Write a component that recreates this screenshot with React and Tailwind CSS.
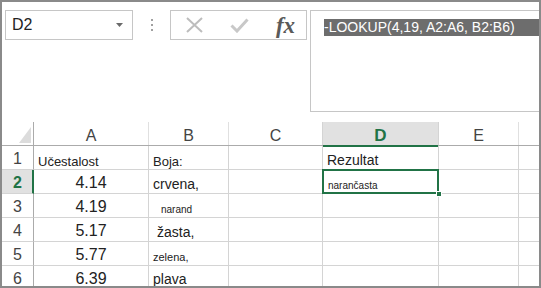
import React from "react";

function Row({ num, active, children }) {
  return (
    <div className="flex h-[24px] shrink-0">
      {active ? (
        <div className="w-[32px] shrink-0 h-full bg-[#e1e1e1] border-r-2 border-r-[#217346] border-b border-b-[#d4d4d4] flex items-center justify-center text-[16px] leading-none font-bold text-[#217346] pl-[1px] pt-[3px]">
          {num}
        </div>
      ) : (
        <div className="w-[32px] shrink-0 h-full border-r border-r-[#ababab] border-b border-b-[#d4d4d4] flex items-center justify-center text-[16px] leading-none text-[#444] pt-[3px]">
          {num}
        </div>
      )}
      {children}
    </div>
  );
}

export default function App() {
  const rows = [
    { n: "1", a: "Učestalost", b: "Boja:", d: "Rezultat" },
    { n: "2", a: "4.14", b: "crvena,", d: "narančasta" },
    { n: "3", a: "4.19", b: "narand" },
    { n: "4", a: "5.17", b: "žasta," },
    { n: "5", a: "5.77", b: "zelena," },
    { n: "6", a: "6.39", b: "plava" },
  ];
  return (
    <div className="w-[541px] h-[288px] bg-white border-2 border-[#8a8a8a] overflow-hidden flex flex-col font-['Liberation_Sans',Arial,sans-serif] text-[#222]">
      {/* top formula area */}
      <div className="h-[120px] shrink-0 flex items-start pt-[8px] pl-[3px]">
        <div className="w-[128px] h-[30px] border border-[#c6c6c6] flex items-center justify-between pl-[6px] pr-[9px]">
          <span className="text-[16px] text-[#222]">D2</span>
          <svg width="7" height="4" viewBox="0 0 7 4">
            <polygon points="0,0 7,0 3.5,4" fill="#6a6a6a" />
          </svg>
        </div>
        <div className="w-[37px] h-[30px] flex flex-col items-center justify-center gap-[3px]">
          <div className="w-[2px] h-[2px] bg-[#a0a0a0]" />
          <div className="w-[2px] h-[2px] bg-[#a0a0a0]" />
          <div className="w-[2px] h-[2px] bg-[#a0a0a0]" />
        </div>
        <div className="w-[137px] h-[30px] border border-[#c6c6c6] flex items-center">
          <div className="w-[45px] flex justify-center pl-[2px]">
            <svg width="17" height="16" viewBox="0 0 17 16">
              <path d="M1 1 L16 15 M16 1 L1 15" stroke="#bdbdbd" strokeWidth="2" fill="none" />
            </svg>
          </div>
          <div className="w-[45px] flex justify-center pl-[1px]">
            <svg width="19" height="15" viewBox="0 0 19 15">
              <path d="M1.5 7.5 L7 13 L17.5 1.5" stroke="#c8c8c8" strokeWidth="3" fill="none" />
            </svg>
          </div>
          <div className="w-[45px] flex justify-center pl-[4px]">
            <span className="font-['Liberation_Serif',serif] italic font-bold text-[23px] text-[#5a5a5a] leading-none">
              fx
            </span>
          </div>
        </div>
        <div className="ml-[3px] flex-1 h-[102px] border border-r-0 border-[#c6c6c6] pt-[8px] pl-[13px]">
          <div className="h-[17px] bg-[#6d6d6d] text-white text-[14px] leading-[17px] whitespace-nowrap">
            -LOOKUP(4,19, A2:A6, B2:B6)
          </div>
        </div>
      </div>

      {/* grid */}
      <div className="flex-1 flex flex-col">
        {/* header row */}
        <div className="flex h-[24px] shrink-0 border-b border-b-[#ababab] text-[16px] leading-none text-[#444]">
          <div className="w-[32px] shrink-0 h-full border-r border-r-[#ababab] flex items-end justify-end pr-[2px] pb-[2px]">
            <svg width="12" height="16" viewBox="0 0 12 16">
              <polygon points="12,0 12,16 0,16" fill="#dcdcdc" />
            </svg>
          </div>
          <div className="w-[115px] shrink-0 h-full border-r border-r-[#e0e0e0] flex items-center justify-center pt-[4px]">A</div>
          <div className="w-[80px] shrink-0 h-full border-r border-r-[#e0e0e0] flex items-center justify-center pt-[4px]">B</div>
          <div className="w-[94px] shrink-0 h-full border-r border-r-[#d4d4d4] flex items-center justify-center pt-[4px]">C</div>
          <div className="w-[116px] shrink-0 h-[25px] bg-[#e1e1e1] border-b-2 border-b-[#217346] border-r border-r-[#d4d4d4] flex items-center justify-center font-bold text-[17px] text-[#217346] pt-[3px]">D</div>
          <div className="w-[80px] shrink-0 h-full border-r border-r-[#e0e0e0] flex items-center justify-center pt-[4px]">E</div>
          <div className="flex-1 h-full" />
        </div>

        {rows.map((r, i) => (
          <Row key={r.n} num={r.n} active={i === 1}>
            {/* A */}
            {i === 0 ? (
              <div className="w-[115px] shrink-0 h-full border-r border-b border-[#d4d4d4] flex items-end pl-[4px] pb-[1px] text-[13px] leading-none">
                {r.a}
              </div>
            ) : (
              <div className="w-[115px] shrink-0 h-full border-r border-b border-[#d4d4d4] flex items-end justify-center pb-[2px] text-[16px] leading-none">
                {r.a}
              </div>
            )}
            {/* B */}
            {i === 0 && (
              <div className="w-[80px] shrink-0 h-full border-r border-b border-[#d4d4d4] flex items-end pl-[4px] pb-[1px] text-[13px] leading-none">
                {r.b}
              </div>
            )}
            {i === 1 && (
              <div className="w-[80px] shrink-0 h-full border-r border-b border-[#d4d4d4] flex items-end pl-[4px] pb-[2px] text-[14px] leading-none">
                {r.b}
              </div>
            )}
            {i === 2 && (
              <div className="w-[80px] shrink-0 h-full border-r border-b border-[#d4d4d4] flex items-end pl-[12px] pb-[2px] text-[10px] leading-none">
                {r.b}
              </div>
            )}
            {i === 3 && (
              <div className="w-[80px] shrink-0 h-full border-r border-b border-[#d4d4d4] flex items-end pl-[8px] pb-[2px] text-[14px] leading-none">
                {r.b}
              </div>
            )}
            {i === 4 && (
              <div className="w-[80px] shrink-0 h-full border-r border-b border-[#d4d4d4] flex items-end pl-[4px] pb-[2px] text-[11px] leading-none">
                {r.b}
              </div>
            )}
            {i === 5 && (
              <div className="w-[80px] shrink-0 h-full border-r border-b border-[#d4d4d4] flex items-end pl-[4px] pb-[3px] text-[14px] leading-none">
                {r.b}
              </div>
            )}
            {/* C */}
            <div className="w-[94px] shrink-0 h-full border-r border-b border-[#d4d4d4]" />
            {/* D */}
            {i === 0 && (
              <div className="w-[116px] shrink-0 h-full border-r border-b border-[#d4d4d4] flex items-end pl-[4px] pb-[2px] text-[14px] leading-none">
                {r.d}
              </div>
            )}
            {i === 1 && (
              <div className="relative w-[116px] shrink-0 h-full border-r border-b border-[#d4d4d4] flex items-end pl-[5px] pb-[2px] text-[10px] leading-none">
                {r.d}
                <div className="absolute left-[-1px] top-[-1px] w-[117px] h-[25px] border-2 border-[#217346]" />
                <div className="absolute right-[-4px] bottom-[-4px] w-[6px] h-[6px] bg-[#217346] border border-white" />
              </div>
            )}
            {i > 1 && (
              <div className="w-[116px] shrink-0 h-full border-r border-b border-[#d4d4d4]" />
            )}
            {/* E */}
            <div className="w-[80px] shrink-0 h-full border-r border-b border-[#d4d4d4]" />
            <div className="flex-1 h-full border-b border-[#d4d4d4]" />
          </Row>
        ))}
      </div>
    </div>
  );
}
